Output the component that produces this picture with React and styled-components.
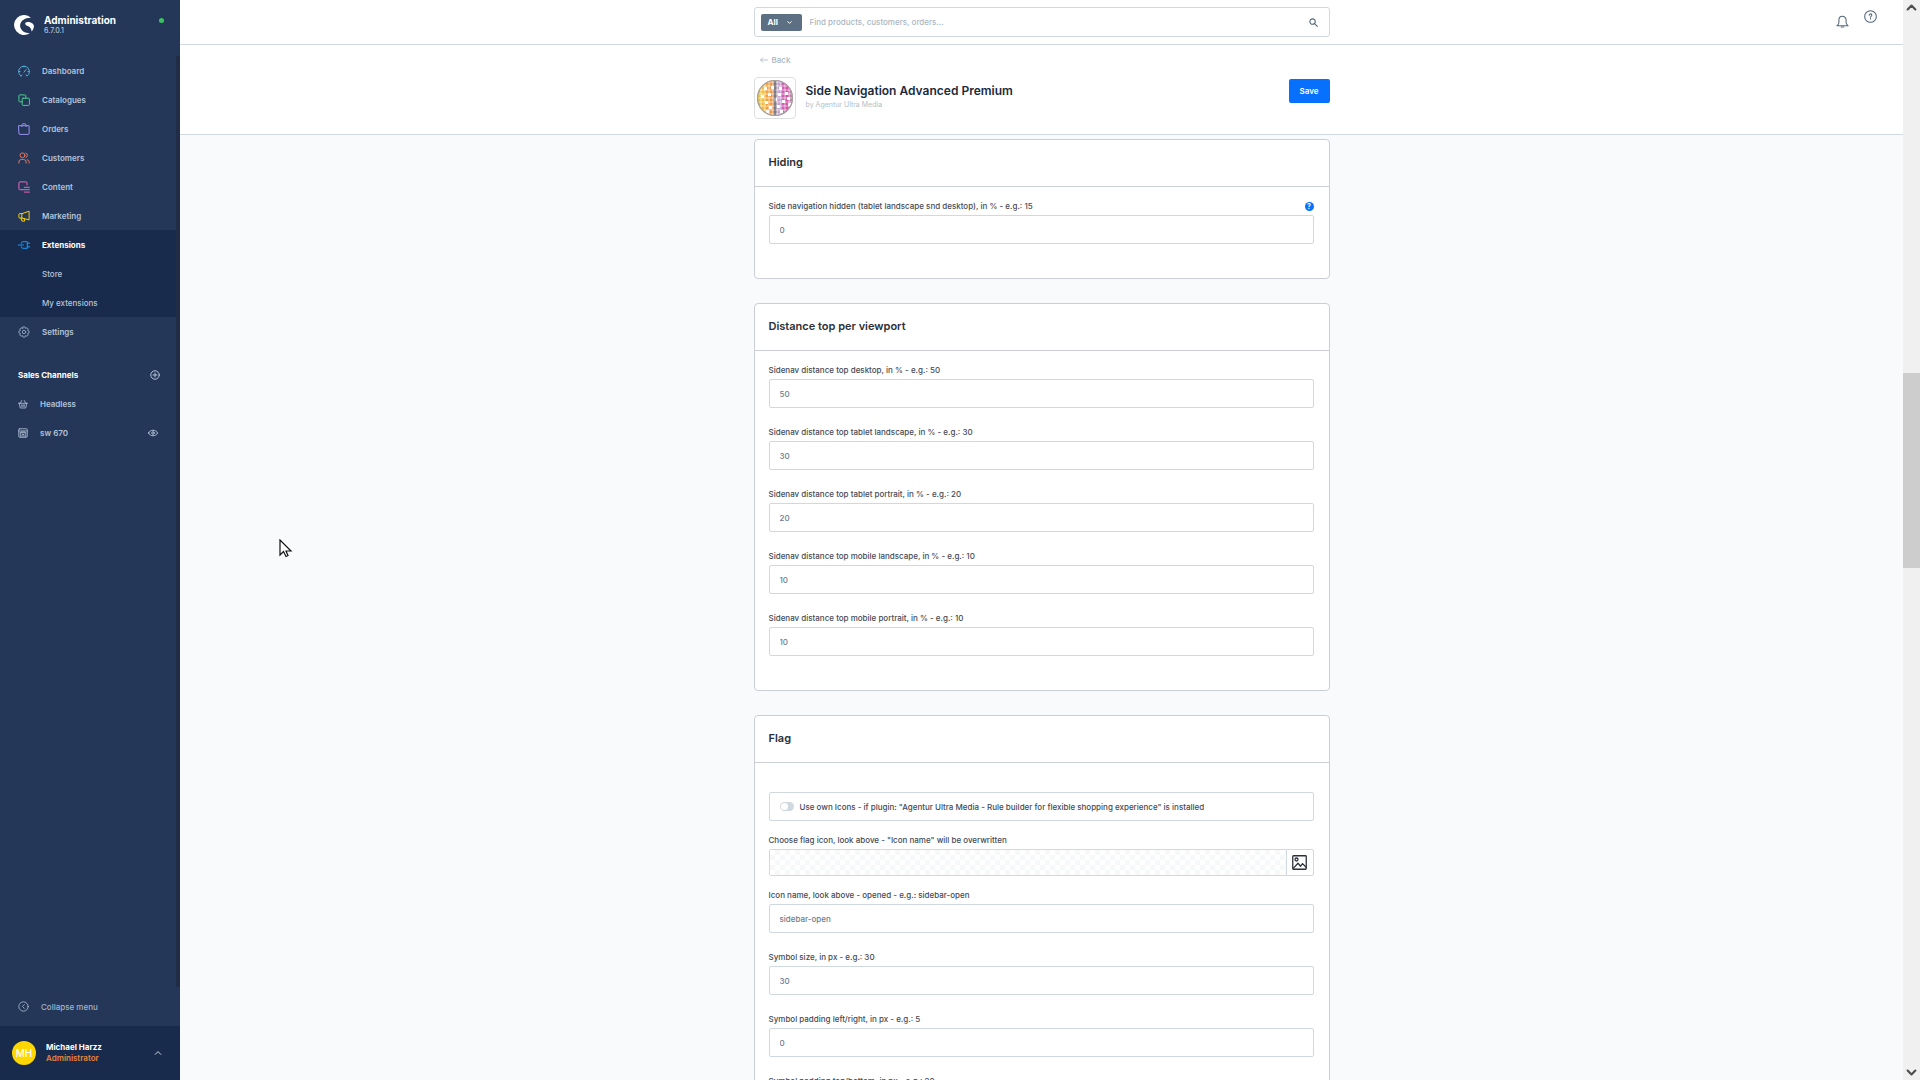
import React from "react"
import styled, { createGlobalStyle } from "styled-components"

const GlobalStyle = createGlobalStyle`
  * {
    box-sizing: border-box;
  }
  body {
    margin: 0;
    font-family: Inter, "Liberation Sans", sans-serif;
    font-size: 8px;
    overflow: hidden;
  }
  button, input {
    font-family: inherit;
  }
  h1, h2, p, ul {
    margin: 0;
    padding: 0;
  }
  ul {
    list-style: none;
  }
`;

const icons = {
  dashboard: (
    <path d="M5 18.500A9 9 0 1 1 15 18.500L13.500 16.500M5 18.500L6.500 16.500M10 12L13.500 7.500M1.200 11H3.500M16.500 11H18.800M10 2V3.500" />
  ),
  catalogues: (
    <>
      <rect x="7" y="7" width="12" height="12" rx="1.5" />
      <path d="M7 13H3A1.500 1.500 0 0 1 1.500 11.500V3A1.500 1.500 0 0 1 3 1.500H11.500A1.500 1.500 0 0 1 13 3V7" />
    </>
  ),
  orders: (
    <>
      <path d="M1.500 4.500H18.500V17.500A1.500 1.500 0 0 1 17 19H3A1.500 1.500 0 0 1 1.500 17.500Z" />
      <path d="M6.500 6V4A3.500 3 0 0 1 13.500 4V6" />
    </>
  ),
  customers: (
    <>
      <circle cx="7.500" cy="5.500" r="4" />
      <path d="M1.500 18.500V16.500A4 4 0 0 1 5.500 12.500H9.500A4 4 0 0 1 13.500 16.500V18.500M13 1.700A4 4 0 0 1 13 9.300M15.500 12.800A4 4 0 0 1 18.500 16.500V18.500" />
    </>
  ),
  content: (
    <path d="M7 14.500H3A1.500 1.500 0 0 1 1.500 13V3A1.500 1.500 0 0 1 3 1.500H13.500A1.500 1.500 0 0 1 15 3V6.500M10.500 10.500H19M7 14.500H19M10.500 18.500H19" />
  ),
  marketing: (
    <>
      <path d="M7 6L18.500 2V16.500L7 13.500ZM7 6H3A1.500 1.500 0 0 0 1.500 7.500V12A1.500 1.500 0 0 0 3 13.500H7" />
      <path d="M5 13.500L6.500 18.500H11L10.500 14.500" />
    </>
  ),
  extensions: (
    <>
      <path d="M0.500 10H9M15.500 7H19.500M15.500 13H19.500" />
      <path d="M5.500 7A2.500 2.500 0 0 1 8 4.500H15.500V15.500H8A2.500 2.500 0 0 1 5.500 13" />
    </>
  ),
  settings: (
    <>
      <path d="M8.500 1.500H11.500L12.300 4L14.900 2.900L17.100 5.100L16 7.700L18.500 8.500V11.500L16 12.300L17.100 14.900L14.900 17.100L12.300 16L11.500 18.500H8.500L7.700 16L5.100 17.100L2.900 14.900L4 12.300L1.500 11.500V8.500L4 7.700L2.900 5.100L5.100 2.900L7.700 4Z" />
      <circle cx="10" cy="10" r="2.800" />
    </>
  ),
  plus: (
    <>
      <circle cx="10" cy="10" r="8.500" />
      <path d="M10 6V14M6 10H14" />
    </>
  ),
  basket: (
    <path d="M1 8.500H19M2.500 8.500L4.500 18H15.500L17.500 8.500M4.500 8.500L7.500 3M15.500 8.500L12.500 3M7.500 11.500V15M10 11.500V15M12.500 11.500V15" />
  ),
  store: (
    <>
      <rect x="1.500" y="1.500" width="17" height="17" rx="1.500" />
      <path d="M1.500 6H18.500M4.500 9.500H15.500M4.500 9.500V18M15.500 9.500V18M8 18V13H12V18M8 6V9.500M12 6V9.500" />
    </>
  ),
  eye: (
    <>
      <path d="M1 10C4 2.500 16 2.500 19 10C16 17.500 4 17.500 1 10Z" />
      <circle cx="10" cy="10" r="2.500" />
    </>
  ),
  collapse: (
    <>
      <circle cx="10" cy="10" r="8.500" />
      <path d="M11.500 6.500L8 10L11.500 13.500" />
    </>
  ),
  up: <path d="M3 13.500L10 6.500L17 13.500" />,
  down: <path d="M3 6.500L10 13.500L17 6.500" />,
  search: (
    <>
      <circle cx="8" cy="8" r="6" />
      <path d="M12.500 12.500L18.500 18.500" />
    </>
  ),
  back: <path d="M19 10H1.500M7 4.500L1.500 10L7 15.500" />,
  bell: (
    <>
      <path d="M1.500 16.500H18.500C16.500 15 15.500 13.500 15.500 11V7.500A5.500 5.500 0 0 0 4.500 7.500V11C4.500 13.500 3.500 15 1.500 16.500Z" />
      <path d="M8 18.500H12" />
    </>
  ),
  help: (
    <>
      <circle cx="10" cy="10" r="9" />
      <path d="M8 8A2 2 0 1 1 10.800 9.800C10.200 10.200 10 10.500 10 11.300M10 13.200V14" />
    </>
  ),
  image: (
    <>
      <rect x="1" y="1" width="18" height="18" rx="1" />
      <circle cx="6" cy="6" r="2" />
      <path d="M2 17.500L8 11L11.500 15L14 11.500L18.500 16" />
    </>
  ),
};

const Icon = ({ name, size = 12, color = "currentColor", weight = 1.6 }) => (
  <svg
    width={size}
    height={size}
    viewBox="0 0 20 20"
    fill="none"
    stroke={color}
    strokeWidth={weight}
    strokeLinecap="round"
    strokeLinejoin="round"
    aria-hidden="true"
  >
    {icons[name]}
  </svg>
);

const Logo = () => (
  <svg width="20" height="20" viewBox="0 0 20 20" aria-hidden="true">
    <path
      fill="#fff"
      d="M16.900 2.700A10 10 0 1 0 15.900 18.100C11.500 18.200 6.200 16 6.100 10.700C6 5.800 11 2.600 16.900 2.700Z"
    />
    <path
      fill="#fff"
      d="M19.900 11.500C20.100 8.800 17 7 13.500 7.100C11 7.200 10.500 9 12.200 10.200C14 11.400 16.500 11.500 17.300 14.800C17.500 15.500 17.500 16 17.500 16.500C18.900 15.100 19.800 13.300 19.900 11.500Z"
    />
  </svg>
);

const ballColors = ["#e8c23a", "#f3bd3e", "#f3a23c", "#ee9a4d", "#8d8490", "#c9a0d4", "#cf62b4", "#d44fa8", "#b78aa9"];

const DiscoBall = () => (
  <svg width="38" height="38" viewBox="0 0 38 38" aria-hidden="true">
    <defs>
      <clipPath id="ball">
        <circle cx="19" cy="19" r="18" />
      </clipPath>
    </defs>
    <g clipPath="url(#ball)">
      {ballColors.map((color, i) => (
        <rect key={color} x={1 + i * 4} y="1" width="4" height="36" fill={color} />
      ))}
      {[3, 7, 11, 15, 19, 23, 27, 31, 35].map((pos) => (
        <path key={pos} d={`M0 ${pos}H38M${pos + 2} 0V38`} stroke="#fff" strokeOpacity="0.6" strokeWidth="1" />
      ))}
      {[[8, 8], [15, 7], [23, 8], [5, 16], [12, 14], [22, 14], [29, 13], [9, 22], [18, 19], [26, 21], [32, 24], [13, 27], [21, 26], [10, 31], [24, 31], [31, 18]].map(([x, y]) => (
        <rect key={`${x}-${y}`} x={x} y={y} width="3" height="3" fill="#fff" />
      ))}
      <rect x="18" y="1" width="2" height="36" fill="#77717a" fillOpacity="0.6" />
    </g>
    <circle cx="19" cy="19" r="17.500" fill="none" stroke="#a59e9c" strokeWidth="1.200" />
  </svg>
);

const navigation = [
  { icon: "dashboard", label: "Dashboard", color: "#4fb3dd" },
  { icon: "catalogues", label: "Catalogues", color: "#4bd08f" },
  { icon: "orders", label: "Orders", color: "#a092f0" },
  { icon: "customers", label: "Customers", color: "#ea7a62" },
  { icon: "content", label: "Content", color: "#ee68c4" },
  { icon: "marketing", label: "Marketing", color: "#ffd700" },
];

const distanceFields = [
  { label: "Sidenav distance top desktop, in % - e.g.: 50", value: "50" },
  { label: "Sidenav distance top tablet landscape, in % - e.g.: 30", value: "30" },
  { label: "Sidenav distance top tablet portrait, in % - e.g.: 20", value: "20" },
  { label: "Sidenav distance top mobile landscape, in % - e.g.: 10", value: "10" },
  { label: "Sidenav distance top mobile portrait, in % - e.g.: 10", value: "10" },
];

const flagFields = [
  { label: "Icon name, look above - opened - e.g.: sidebar-open", value: "sidebar-open" },
  { label: "Symbol size, in px - e.g.: 30", value: "30" },
  { label: "Symbol padding left/right, in px - e.g.: 5", value: "0" },
  { label: "Symbol padding top/bottom, in px - e.g.: 20", value: "20" },
];

const Field = ({ label, value, help }) => {
  const id = React.useId();
  return (
    <FieldWrapper>
      <LabelRow>
        <label htmlFor={id}>{label}</label>
        {help && <HelpButton type="button" aria-label="Help">?</HelpButton>}
      </LabelRow>
      <TextInput id={id} type="text" defaultValue={value} />
    </FieldWrapper>
  )
};

const Sidebar = () => (
  <SidebarWrapper>
    <Brand>
      <Logo />
      <BrandText>
        <BrandName>Administration</BrandName>
        <Version>6.7.0.1</Version>
      </BrandText>
      <StatusDot />
    </Brand>
    <SidebarScroll>
      <SidebarContent>
        <ul>
          {navigation.map(({ icon, label, color }) => (
            <li key={label}>
              <NavLink href="#">
                <Icon name={icon} color={color} />
                {label}
              </NavLink>
            </li>
          ))}
          <ActiveGroup>
            <NavLink href="#" $active>
              <Icon name="extensions" color="#189eff" />
              Extensions
            </NavLink>
            <SubLink href="#">Store</SubLink>
            <SubLink href="#">My extensions</SubLink>
          </ActiveGroup>
          <li>
            <NavLink href="#">
              <Icon name="settings" color="#8fa3bd" />
              Settings
            </NavLink>
          </li>
        </ul>
        <ChannelHeader>
          <h2>Sales Channels</h2>
          <IconButton type="button" aria-label="Add sales channel">
            <Icon name="plus" size={10} weight={2} />
          </IconButton>
        </ChannelHeader>
        <ul>
          <li>
            <NavLink href="#">
              <Icon name="basket" size={10} />
              Headless
            </NavLink>
          </li>
          <ChannelRow>
            <NavLink href="#">
              <Icon name="store" size={10} />
              sw 670
            </NavLink>
            <IconButton type="button" aria-label="Open storefront">
              <Icon name="eye" size={10} weight={2} />
            </IconButton>
          </ChannelRow>
        </ul>
      </SidebarContent>
      <SidebarTrack />
    </SidebarScroll>
    <Collapse type="button">
      <Icon name="collapse" size={11} />
      Collapse menu
    </Collapse>
    <User type="button">
      <Avatar>MH</Avatar>
      <UserText>
        <UserName>Michael Harzz</UserName>
        <UserRole>Administrator</UserRole>
      </UserText>
      <Icon name="up" size={8} color="#d1d9e0" weight={2.5} />
    </User>
  </SidebarWrapper>
);

const App = () => (
  <>
    <GlobalStyle />
    <Page>
      <Sidebar />
      <Main>
        <TopBar>
          <Column>
            <SearchBox>
              <SearchType type="button">
                All
                <Icon name="down" size={5} weight={4} />
              </SearchType>
              <SearchInput type="text" aria-label="Search" placeholder="Find products, customers, orders..." />
              <SearchButton type="button" aria-label="Search">
                <Icon name="search" size={9} weight={2.4} />
              </SearchButton>
            </SearchBox>
          </Column>
          <TopActions>
            <IconButton type="button" aria-label="Notifications">
              <Icon name="bell" size={13} color="#52667a" />
            </IconButton>
            <HelpIcon type="button" aria-label="Help center">
              <Icon name="help" size={13} color="#52667a" />
            </HelpIcon>
          </TopActions>
        </TopBar>
        <PageHeader>
          <Column>
            <BackLink href="#">
              <Icon name="back" size={8} weight={2} />
              Back
            </BackLink>
            <HeaderRow>
              <Thumbnail>
                <DiscoBall />
              </Thumbnail>
              <TitleBlock>
                <h1>Side Navigation Advanced Premium</h1>
                <p>by Agentur Ultra Media</p>
              </TitleBlock>
              <SaveButton type="button">Save</SaveButton>
            </HeaderRow>
          </Column>
        </PageHeader>
        <Content>
          <Column>
            <Card>
              <CardTitle>Hiding</CardTitle>
              <CardBody>
                <Field label="Side navigation hidden (tablet landscape snd desktop), in % - e.g.: 15" value="0" help />
              </CardBody>
            </Card>
            <Card>
              <CardTitle>Distance top per viewport</CardTitle>
              <CardBody>
                {distanceFields.map((field) => (
                  <Field key={field.label} {...field} />
                ))}
              </CardBody>
            </Card>
            <Card>
              <CardTitle>Flag</CardTitle>
              <CardBody>
                <SwitchBox>
                  <Switch type="checkbox" role="switch" />
                  Use own Icons - if plugin: "Agentur Ultra Media - Rule builder for flexible shopping experience" is installed
                </SwitchBox>
                <MediaField>
                  <LabelRow>
                    <span id="media-label">Choose flag icon, look above - "Icon name" will be overwritten</span>
                  </LabelRow>
                  <MediaBox>
                    <MediaPreview />
                    <MediaButton type="button" aria-labelledby="media-label">
                      <Icon name="image" size={15} weight={1.7} />
                    </MediaButton>
                  </MediaBox>
                </MediaField>
                {flagFields.map((field) => (
                  <Field key={field.label} {...field} />
                ))}
              </CardBody>
            </Card>
          </Column>
        </Content>
      </Main>
      <Scrollbar>
        <Icon name="up" size={11} color="#505050" weight={4} />
        <Track>
          <Thumb />
        </Track>
        <Icon name="down" size={11} color="#505050" weight={4} />
      </Scrollbar>
      <Cursor width="14" height="20" viewBox="0 0 14 20" aria-hidden="true">
        <path d="M1 1V16L4.500 12.500L7 17.500L9 16.500L7 12H12Z" fill="#fff" stroke="#111" strokeWidth="1.200" />
      </Cursor>
    </Page>
  </>
);
export default App

const Page = styled.div`
  display: flex;
  height: 100vh;
  background-color: #f9fafb;
`;

const SidebarWrapper = styled.nav`
  flex: 0 0 180px;
  display: flex;
  flex-direction: column;
  background-color: #243758;
  color: #b5c4da;
`;

const Brand = styled.div`
  display: flex;
  align-items: flex-start;
  height: 56px;
  padding: 15px 16px 0 14px;
`;

const BrandText = styled.div`
  flex: 1;
  padding-left: 10px;
`;

const BrandName = styled.div`
  font-size: 10px;
  line-height: 10px;
  font-weight: 700;
  color: #fff;
`;

const Version = styled.div`
  font-size: 7px;
  line-height: 11px;
  font-weight: 500;
`;

const StatusDot = styled.span`
  width: 5px;
  height: 5px;
  margin-top: 3px;
  border-radius: 50%;
  background-color: #3cc261;
`;

const SidebarScroll = styled.div`
  flex: 1;
  display: flex;
  min-height: 0;
`;

const SidebarContent = styled.div`
  flex: 1;
  min-width: 0;
  overflow: hidden;

  h2 {
    font-size: 8px;
    font-weight: 700;
    color: #fff;
  }
`;

const SidebarTrack = styled.div`
  flex: 0 0 4px;
  background-color: #212d46;
`;

const NavLink = styled.a`
  display: flex;
  align-items: center;
  gap: 12px;
  height: 29px;
  padding-left: 18px;
  font-size: 8px;
  font-weight: ${({ $active }) => ($active ? 700 : 600)};
  color: ${({ $active }) => ($active ? "#fff" : "#b5c4da")};
  text-decoration: none;
`;

const SubLink = styled(NavLink)`
  padding-left: 42px;
  font-weight: 500;
`;

const ActiveGroup = styled.li`
  background-color: #182b4d;
`;

const ChannelHeader = styled.div`
  display: flex;
  align-items: center;
  justify-content: space-between;
  height: 28px;
  margin-top: 15px;
  padding: 0 16px 0 18px;
`;

const ChannelRow = styled.li`
  display: flex;
  align-items: center;
  justify-content: space-between;
  padding-right: 18px;
`;

const IconButton = styled.button`
  display: flex;
  padding: 0;
  border: 0;
  background: none;
  color: #b5c4da;
  cursor: pointer;
`;

const Collapse = styled.button`
  display: flex;
  align-items: center;
  gap: 12px;
  height: 39px;
  padding: 0 0 0 18px;
  border: 0;
  background: none;
  font-size: 8px;
  font-weight: 500;
  color: #a3b4cc;
`;

const User = styled.button`
  display: flex;
  align-items: center;
  height: 54px;
  padding: 0 18px 0 12px;
  border: 0;
  background-color: #182b4d;
  text-align: left;
`;

const Avatar = styled.span`
  width: 24px;
  height: 24px;
  border-radius: 50%;
  background-color: #ffd700;
  color: #fff;
  font-size: 10px;
  line-height: 24px;
  font-weight: 500;
  text-align: center;
`;

const UserText = styled.span`
  flex: 1;
  display: flex;
  flex-direction: column;
  padding-left: 10px;
  font-size: 8px;
  line-height: 11px;
`;

const UserName = styled.span`
  font-weight: 700;
  color: #fff;
`;

const UserRole = styled.span`
  font-weight: 600;
  color: #e8833a;
`;

const Main = styled.main`
  flex: 1;
  min-width: 0;
  display: flex;
  flex-direction: column;
`;

const Column = styled.div`
  width: 100%;
  max-width: 576px;
  margin: 0 auto;
`;

const TopBar = styled.header`
  position: relative;
  flex: 0 0 45px;
  padding-top: 7px;
  border-bottom: 1px solid #d1d9e0;
  background-color: #fff;
`;

const SearchBox = styled.div`
  display: flex;
  align-items: center;
  height: 30px;
  padding: 0 6px;
  border: 1px solid #d1d9e0;
  border-radius: 3px;
`;

const SearchType = styled.button`
  display: flex;
  align-items: center;
  justify-content: space-between;
  width: 41px;
  height: 17px;
  padding: 0 10px 0 7px;
  border: 0;
  border-radius: 2px;
  background-color: #5c6f83;
  color: #fff;
  font-size: 8px;
  font-weight: 700;
`;

const SearchInput = styled.input`
  flex: 1;
  padding: 0 8px;
  border: 0;
  outline: 0;
  font-size: 8px;
  font-weight: 500;

  &::placeholder {
    color: #a9b6c2;
  }
`;

const SearchButton = styled(IconButton)`
  padding-right: 5px;
  color: #52667a;
`;

const TopActions = styled.div`
  position: absolute;
  top: 10px;
  right: 26px;
  display: flex;
  align-items: flex-end;
  gap: 15px;
  height: 18px;
`;

const HelpIcon = styled(IconButton)`
  align-self: flex-start;
`;

const PageHeader = styled.div`
  flex: 0 0 90px;
  padding-top: 9px;
  border-bottom: 1px solid #d1d9e0;
  background-color: #fff;
`;

const BackLink = styled.a`
  display: flex;
  align-items: center;
  gap: 4px;
  height: 11px;
  margin-left: 6px;
  font-size: 8px;
  font-weight: 500;
  color: #a9b6c2;
  text-decoration: none;
`;

const HeaderRow = styled.div`
  display: flex;
  align-items: flex-start;
  padding-top: 12px;
`;

const Thumbnail = styled.div`
  display: flex;
  align-items: center;
  justify-content: center;
  width: 42px;
  height: 42px;
  border: 1px solid #dcdfe2;
  border-radius: 4px;
`;

const TitleBlock = styled.div`
  flex: 1;
  padding: 6px 0 0 10px;

  h1 {
    font-size: 12px;
    line-height: 16px;
    font-weight: 600;
    color: #1a2b3c;
  }

  p {
    font-size: 7px;
    line-height: 12px;
    color: #b3bec8;
  }
`;

const SaveButton = styled.button`
  width: 41px;
  height: 24px;
  margin-top: 2px;
  padding: 0;
  border: 0;
  border-radius: 2px;
  background-color: #0870ff;
  color: #fff;
  font-size: 8px;
  font-weight: 600;
`;

const Content = styled.div`
  flex: 1;
  min-height: 0;
  padding-top: 4px;
  overflow: hidden;
`;

const Card = styled.section`
  margin-bottom: 24px;
  border: 1px solid #cbced6;
  border-radius: 4px;
  background-color: #fff;
`;

const CardTitle = styled.h2`
  height: 47px;
  padding: 0 14px;
  border-bottom: 1px solid #cbced6;
  font-size: 11px;
  line-height: 44px;
  font-weight: 600;
  color: #2b2f38;
`;

const CardBody = styled.div`
  padding: 14px 15px 15px 14px;
`;

const FieldWrapper = styled.div`
  margin-bottom: 19px;
`;

const LabelRow = styled.div`
  display: flex;
  align-items: center;
  justify-content: space-between;
  height: 10px;
  margin-bottom: 4px;
  font-size: 8px;
  line-height: 10px;
  font-weight: 500;
  color: #454a55;
`;

const HelpButton = styled.button`
  width: 9px;
  height: 9px;
  padding: 0;
  border: 0;
  border-radius: 50%;
  background-color: #0870ff;
  color: #fff;
  font-size: 7px;
  line-height: 9px;
  font-weight: 700;
`;

const TextInput = styled.input`
  display: block;
  width: 100%;
  height: 29px;
  padding: 0 10px;
  border: 1px solid #d1d9e0;
  border-radius: 2px;
  background-color: #fff;
  font-size: 8px;
  font-weight: 500;
  color: #6d7b8e;
`;

const SwitchBox = styled.label`
  display: flex;
  align-items: center;
  gap: 6px;
  height: 29px;
  margin: 15px 0 14px;
  padding: 0 10px;
  border: 1px solid #d1d9e0;
  border-radius: 2px;
  font-size: 8px;
  font-weight: 500;
  color: #454a55;
`;

const Switch = styled.input`
  appearance: none;
  display: flex;
  align-items: center;
  width: 14px;
  height: 9px;
  margin: 0;
  padding: 0 1px;
  border-radius: 5px;
  background-color: #d1d9e0;

  &::before {
    content: "";
    width: 7px;
    height: 7px;
    border-radius: 50%;
    background-color: #fff;
  }
`;

const MediaField = styled.div`
  margin-bottom: 14px;
`;

const MediaBox = styled.div`
  display: flex;
  height: 27px;
  border: 1px solid #d1d9e0;
  border-radius: 2px;
`;

const MediaPreview = styled.div`
  flex: 1;
  background: repeating-conic-gradient(#f7f8f9 0 25%, #fff 0 50%) 0 0 / 10px 10px;
`;

const MediaButton = styled.button`
  display: flex;
  align-items: center;
  justify-content: center;
  width: 27px;
  padding: 0;
  border: 0;
  border-left: 1px solid #d1d9e0;
  background: none;
  color: #2b2f38;
`;

const Scrollbar = styled.div`
  flex: 0 0 17px;
  display: flex;
  flex-direction: column;
  align-items: center;
  padding: 2px 0;
  background-color: #f0f0f0;
`;

const Track = styled.div`
  flex: 1;
  width: 100%;
  padding-top: 360px;
`;

const Thumb = styled.div`
  height: 195px;
  background-color: #cdcdcd;
`;

const Cursor = styled.svg`
  position: absolute;
  top: 539px;
  left: 279px;
`;
